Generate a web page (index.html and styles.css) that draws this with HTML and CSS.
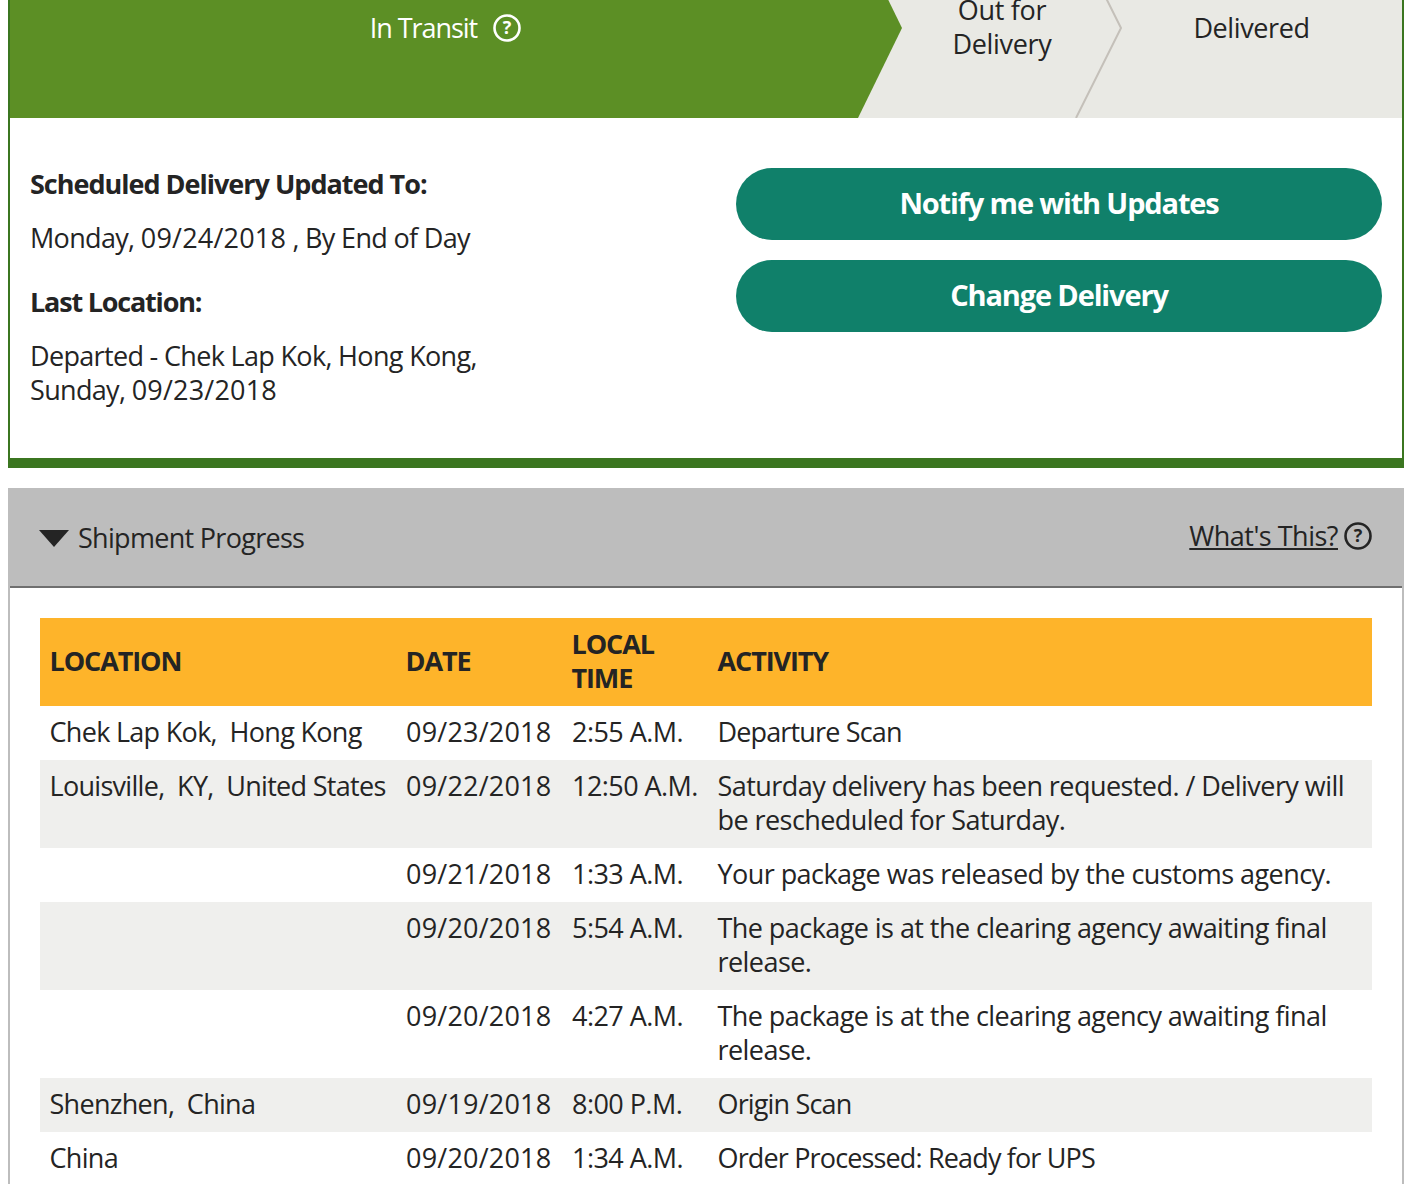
FILE: index.html
```html
<!DOCTYPE html>
<html lang="en">
<head>
<meta charset="utf-8">
<title>Shipment tracking</title>
<link rel="stylesheet" href="styles.css">
</head>
<body>
<section class="status-card">
  <div class="tracker">
    <div class="step step-active">
      <span class="step-label">In Transit</span>
      <svg class="help-icon" width="30" height="30" viewBox="0 0 30 30" aria-hidden="true"><circle cx="15" cy="15" r="12.5" fill="none" stroke="#fff" stroke-width="2.6"/><text x="15" y="21" text-anchor="middle" class="help-mark" fill="#fff">?</text></svg>
    </div>
    <div class="step step-middle"><span class="step-text">Out for<br>Delivery</span></div>
    <div class="step step-last">Delivered</div>
    <svg class="separator" width="50" height="180" viewBox="0 0 50 180" aria-hidden="true"><polyline points="2,0 47,90 2,180" fill="none" stroke="#c4c0b9" stroke-width="2"/></svg>
  </div>
  <div class="summary">
    <div class="summary-text">
      <p class="label">Scheduled Delivery Updated To:</p>
      <p class="value">Monday, <span class="num">09/24/2018</span> , By End of Day</p>
      <p class="label label-gap">Last Location:</p>
      <p class="value">Departed - Chek Lap Kok, Hong Kong,<br>Sunday, <span class="num">09/23/2018</span></p>
    </div>
    <div class="actions">
      <a class="pill">Notify me with Updates</a>
      <a class="pill">Change Delivery</a>
    </div>
  </div>
</section>

<section class="progress">
  <header class="progress-head">
    <div class="progress-title">
      <svg width="30" height="18" viewBox="0 0 30 18" aria-hidden="true"><path d="M0 1H30L15 18Z" fill="#242424"/></svg>
      <span>Shipment Progress</span>
    </div>
    <div class="whats-this">
      <a>What's This?</a>
      <svg width="30" height="30" viewBox="0 0 30 30" aria-hidden="true"><circle cx="15" cy="15" r="12.5" fill="none" stroke="#242424" stroke-width="2.6"/><text x="15" y="21" text-anchor="middle" class="help-mark" fill="#242424">?</text></svg>
    </div>
  </header>
  <div class="progress-body">
    <table>
      <colgroup><col class="c-loc"><col class="c-date"><col class="c-time"><col></colgroup>
      <thead>
        <tr><th>LOCATION</th><th>DATE</th><th>LOCAL<br>TIME</th><th>ACTIVITY</th></tr>
      </thead>
      <tbody>
        <tr><td class="place">Chek Lap Kok,&nbsp; Hong Kong</td><td class="date">09/23/2018</td><td>2:55 A.M.</td><td class="activity tight">Departure Scan</td></tr>
        <tr><td class="place">Louisville,&nbsp; KY,&nbsp; United States</td><td class="date">09/22/2018</td><td>12:50 A.M.</td><td class="activity">Saturday delivery has been requested. / Delivery will be rescheduled for Saturday.</td></tr>
        <tr><td class="place"></td><td class="date">09/21/2018</td><td>1:33 A.M.</td><td class="activity">Your package was released by the customs agency.</td></tr>
        <tr><td class="place"></td><td class="date">09/20/2018</td><td>5:54 A.M.</td><td class="activity">The package is at the clearing agency awaiting final release.</td></tr>
        <tr><td class="place"></td><td class="date">09/20/2018</td><td>4:27 A.M.</td><td class="activity">The package is at the clearing agency awaiting final release.</td></tr>
        <tr><td class="place">Shenzhen,&nbsp; China</td><td class="date">09/19/2018</td><td>8:00 P.M.</td><td class="activity tight">Origin Scan</td></tr>
        <tr><td class="place">China</td><td class="date">09/20/2018</td><td>1:34 A.M.</td><td class="activity tight">Order Processed: Ready for UPS</td></tr>
      </tbody>
    </table>
  </div>
</section>
</body>
</html>
```
FILE: styles.css
```css
html { overflow: hidden; }
body {
  margin: -62px 8px 0;
  font-family: "Open Sans", sans-serif;
  font-size: 27px;
  line-height: 34px;
  letter-spacing: -0.55px;
  color: #242424;
  background: #fff;
}
.status-card {
  border: 2px solid #3b7620;
  border-width: 0 2px 10px;
}
.tracker {
  position: relative;
  display: flex;
  height: 180px;
  background: #e9e9e4;
}
.step {
  display: flex;
  align-items: center;
  justify-content: center;
  text-align: center;
  box-sizing: border-box;
}
.step-active {
  flex: 0 0 892px;
  gap: 15px;
  padding-right: 20px;
  color: #fff;
  background: #5c8f25;
  clip-path: polygon(0 0, 848px 0, 892px 50%, 848px 100%, 0 100%);
  letter-spacing: -1.05px;
}
.step-middle { flex: 0 0 200px; }
.step-text { letter-spacing: -0.3px; margin-top: -2px; }
.step-last { flex: 1; letter-spacing: -0.4px; padding-right: 1px; }
.separator {
  position: absolute;
  left: 1064px;
  top: 0;
}
.help-mark {
  font-family: "Open Sans", sans-serif;
  font-size: 18px;
  font-weight: 700;
  letter-spacing: 0;
}
.summary {
  display: flex;
  justify-content: space-between;
  padding: 49px 20px 51px;
}
.summary-text p { margin: 0 0 20px; }
.summary-text p:last-child { margin-bottom: 0; }
.label { font-weight: 700; letter-spacing: -1px; }
.value { letter-spacing: -0.67px; }
.num { letter-spacing: 0.2px; }
.summary-text .value + .label-gap { margin-top: 30px; letter-spacing: -1.2px; }
.actions {
  display: flex;
  flex-direction: column;
  gap: 20px;
  width: 646px;
  margin-top: 1px;
}
.pill {
  display: flex;
  align-items: center;
  justify-content: center;
  height: 72px;
  padding-bottom: 2px;
  box-sizing: border-box;
  border-radius: 36px;
  background: #10806a;
  color: #fff;
  font-size: 29px;
  font-weight: 700;
  letter-spacing: -1.15px;
}
.progress {
  margin-top: 20px;
  border: 2px solid #bdbdbd;
  border-width: 0 2px;
}
.progress-head {
  display: flex;
  align-items: center;
  justify-content: space-between;
  height: 100px;
  margin: 0 -2px;
  padding: 0 31px 0 31px;
  background: #bdbdbd;
  box-sizing: border-box;
  position: relative;
}
.progress-head::after {
  content: "";
  position: absolute;
  left: 2px;
  right: 2px;
  bottom: 0;
  height: 2px;
  background: #6f6f6f;
}
.progress-title {
  display: flex;
  align-items: center;
  gap: 9px;
}
.progress-title span { letter-spacing: -0.7px; }
.whats-this {
  display: flex;
  align-items: center;
  gap: 5px;
  margin-top: -4px;
}
.whats-this a { text-decoration: underline; letter-spacing: -0.5px; }
.progress-body { padding: 30px 30px 0; }
table {
  width: 100%;
  table-layout: fixed;
  border-collapse: collapse;
}
.c-loc { width: 356px; }
.c-date { width: 166px; }
.c-time { width: 146px; }
th, td {
  padding: 9px 10px 11px;
  text-align: left;
  vertical-align: top;
}
th {
  padding: 9px 10px 11px 9.5px;
  vertical-align: middle;
  background: #feb42a;
  font-weight: 700;
  letter-spacing: -1.1px;
}
td.date { letter-spacing: 0.2px; }
td.place { letter-spacing: -0.7px; white-space: nowrap; padding-left: 9.5px; }
td.activity { padding-left: 9.5px; letter-spacing: -0.56px; }
td.tight { letter-spacing: -0.85px; }
tbody tr:nth-child(even) td { background: #efefed; }
```
